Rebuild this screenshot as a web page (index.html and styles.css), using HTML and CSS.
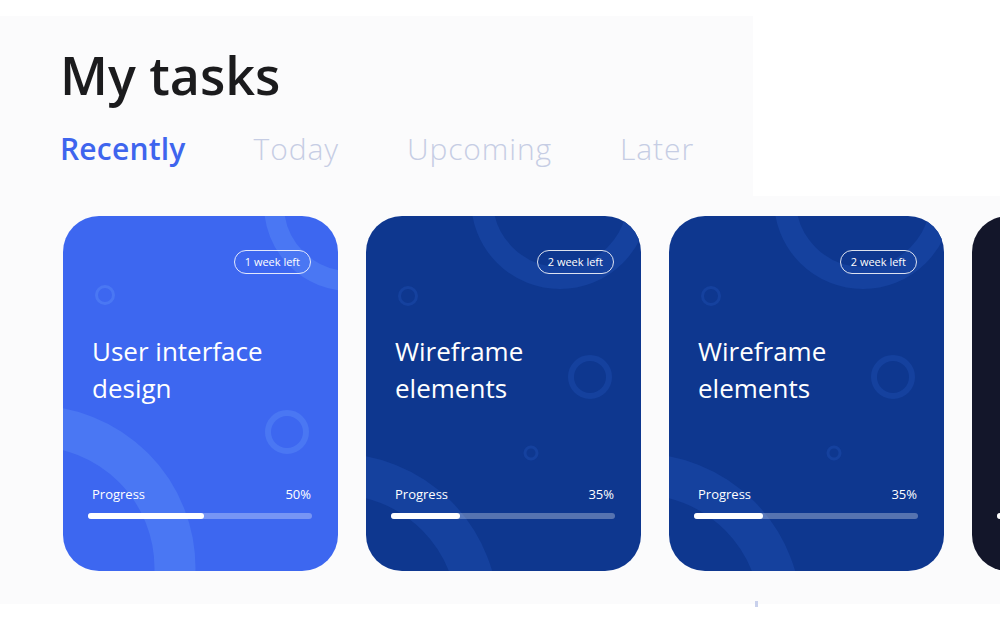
FILE: index.html
```html
<!DOCTYPE html>
<html lang="en">
<head>
<meta charset="utf-8">
<title>My tasks</title>
<link rel="stylesheet" href="styles.css">
</head>
<body>
<main class="page">
  <header class="head">
    <h1 class="title">My tasks</h1>
    <nav class="tabs">
      <a class="tab tab-active">Recently</a>
      <a class="tab">Today</a>
      <a class="tab">Upcoming</a>
      <a class="tab">Later</a>
    </nav>
  </header>

  <section class="cards">
    <article class="card card-blue">
      <svg class="deco" viewBox="0 0 275 355" aria-hidden="true">
        <circle cx="287" cy="-11" r="76" stroke-width="20"/>
        <circle cx="42" cy="79" r="8.5" stroke-width="3"/>
        <circle cx="224" cy="216" r="19" stroke-width="6"/>
        <circle cx="-30" cy="352" r="142" stroke-width="41"/>
      </svg>
      <span class="badge">1 week left</span>
      <h2 class="card-title">User interface design</h2>
      <div class="progress">
        <div class="progress-row"><span>Progress</span><span>50%</span></div>
        <div class="bar"><div class="fill" style="width:52%"></div></div>
      </div>
    </article>

    <article class="card card-navy">
      <svg class="deco" viewBox="0 0 275 355" aria-hidden="true">
        <circle cx="194" cy="-16" r="78" stroke-width="22"/>
        <circle cx="42" cy="80" r="8.5" stroke-width="3"/>
        <circle cx="224" cy="161" r="19" stroke-width="6"/>
        <circle cx="165" cy="237" r="6" stroke-width="3"/>
        <circle cx="-30" cy="400" r="142" stroke-width="41"/>
      </svg>
      <span class="badge">2 week left</span>
      <h2 class="card-title">Wireframe elements</h2>
      <div class="progress">
        <div class="progress-row"><span>Progress</span><span>35%</span></div>
        <div class="bar"><div class="fill" style="width:31%"></div></div>
      </div>
    </article>

    <article class="card card-navy">
      <svg class="deco" viewBox="0 0 275 355" aria-hidden="true">
        <circle cx="194" cy="-16" r="78" stroke-width="22"/>
        <circle cx="42" cy="80" r="8.5" stroke-width="3"/>
        <circle cx="224" cy="161" r="19" stroke-width="6"/>
        <circle cx="165" cy="237" r="6" stroke-width="3"/>
        <circle cx="-30" cy="400" r="142" stroke-width="41"/>
      </svg>
      <span class="badge">2 week left</span>
      <h2 class="card-title">Wireframe elements</h2>
      <div class="progress">
        <div class="progress-row"><span>Progress</span><span>35%</span></div>
        <div class="bar"><div class="fill" style="width:31%"></div></div>
      </div>
    </article>

    <article class="card card-dark">
      <div class="progress">
        <div class="bar"><div class="fill" style="width:20%"></div></div>
      </div>
    </article>
  </section>
  <div class="scroll-mark"></div>
</main>
</body>
</html>
```

FILE: styles.css
```css
* { box-sizing: border-box; }

html, body {
  margin: 0;
  padding: 0;
  background: #ffffff;
}

body {
  width: 1000px;
  height: 622px;
  overflow: hidden;
  font-family: "Open Sans", "Noto Sans", "DejaVu Sans", sans-serif;
}

.page {
  position: relative;
  padding-top: 16px;
}

.head {
  width: 753px;
  height: 180px;
  background: #fbfbfc;
  padding: 29px 0 0 60px;
}

.title {
  margin: 0;
  font-size: 52px;
  line-height: 60px;
  font-weight: 600;
  color: #1b1b1d;
}

.tabs {
  display: flex;
  margin-top: 24px;
  height: 40px;
  align-items: center;
}

.tab {
  font-size: 30px;
  line-height: 40px;
  font-weight: 300;
  color: #c6cde4;
  margin-right: 68px;
  letter-spacing: 0.9px;
}

.tab-active {
  color: #3e65ee;
  font-weight: 600;
  letter-spacing: 0.2px;
}

.cards {
  display: flex;
  gap: 28px;
  height: 408px;
  background: #fbfbfc;
  padding: 20px 0 0 63px;
  overflow: hidden;
}

.card {
  position: relative;
  flex: 0 0 275px;
  height: 355px;
  border-radius: 36px;
  overflow: hidden;
  display: flex;
  flex-direction: column;
  padding: 34px 27px 52px 29px;
  color: #ffffff;
}

.card-blue { background: #3d67f0; }
.card-blue .deco circle { stroke: #4a77f3; }
.card-navy { background: #0e378f; }
.card-navy .deco circle { stroke: #15419e; }
.card-dark { background: #13162a; }

.deco {
  position: absolute;
  left: 0;
  top: 0;
  width: 275px;
  height: 355px;
  overflow: visible;
}

.deco circle { fill: none; }

.badge {
  position: relative;
  align-self: flex-end;
  height: 24px;
  line-height: 21px;
  padding: 0 10px;
  border: 1.5px solid rgba(255, 255, 255, 0.85);
  border-radius: 12px;
  font-size: 11px;
}

.card-title {
  position: relative;
  margin: 59px 0 0;
  font-size: 26px;
  line-height: 37px;
  font-weight: 500;
  max-width: 200px;
}

.progress {
  position: relative;
  margin-top: auto;
}

.progress-row {
  display: flex;
  justify-content: space-between;
  font-size: 13px;
  line-height: 18px;
}

.bar {
  margin: 10px -1px 0 -4px;
  height: 6px;
  border-radius: 3px;
  background: rgba(255, 255, 255, 0.3);
}

.fill {
  height: 6px;
  border-radius: 3px;
  background: #ffffff;
}

.scroll-mark {
  position: absolute;
  left: 755px;
  top: 601px;
  width: 3px;
  height: 6px;
  background: #c9d1ec;
}
```
